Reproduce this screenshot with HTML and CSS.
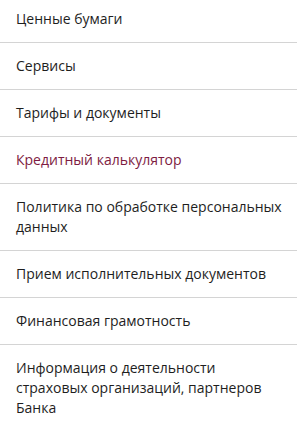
FILE: index.html
```html
<!DOCTYPE html>
<html lang="ru">
<head>
<meta charset="utf-8">
<link rel="stylesheet" href="styles.css">
</head>
<body>
<ul class="menu">
  <li class="item first"><a href="#">Ценные бумаги</a></li>
  <li class="item"><a href="#">Сервисы</a></li>
  <li class="item"><a href="#">Тарифы и документы</a></li>
  <li class="item"><a href="#" class="active">Кредитный калькулятор</a></li>
  <li class="item"><a href="#">Политика по обработке персональных данных</a></li>
  <li class="item"><a href="#">Прием исполнительных документов</a></li>
  <li class="item"><a href="#">Финансовая грамотность</a></li>
  <li class="item"><a href="#">Информация о деятельности страховых организаций, партнеров Банка</a></li>
</ul>
</body>
</html>
```
FILE: styles.css
```css
html, body {
  margin: 0;
  padding: 0;
  background: #fff;
}
body {
  font-family: "Open Sans", "Noto Sans", sans-serif;
  font-size: 14px;
  line-height: 20px;
  color: #1e1e1e;
  overflow: hidden;
}
.menu {
  list-style: none;
  margin: 0 1px 0 0;
  padding: 0;
}
.item {
  border-bottom: 1px solid #d4d4d4;
  padding: 13px 13px 13px 16px;
}
.item.first {
  padding-top: 9px;
}
.item a {
  color: #1e1e1e;
  text-decoration: none;
}
.item a.active {
  color: #7e1c42;
}
```
